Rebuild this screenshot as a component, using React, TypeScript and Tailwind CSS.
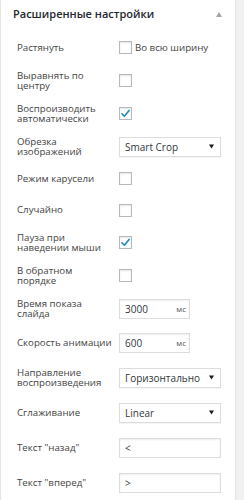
import React from "react";

const font = { fontFamily: '"Open Sans", "Noto Sans", sans-serif' };

function Check({ checked }: { checked?: boolean }) {
  return (
    <div className="w-[13px] h-[13px] border border-[#b4b9be] bg-white shadow-[inset_0_1px_2px_rgba(0,0,0,0.1)] flex items-center justify-center">
      {checked && (
        <svg width="11" height="11" viewBox="0 0 20 20">
          <path d="M3.5 10.5 L8 15 L16.5 4.5" fill="none" stroke="#1e8cbe" strokeWidth="3" strokeLinecap="round" strokeLinejoin="round" />
        </svg>
      )}
    </div>
  );
}

function Select({ value }: { value: string }) {
  return (
    <div className="w-[102px] h-[20px] border border-[#dddddd] bg-white flex items-center justify-between pl-[5px] pr-[6px] shadow-[0_1px_1px_rgba(0,0,0,0.04)]">
      <span className="text-[10px] text-[#32373c] leading-none">{value}</span>
      <svg width="5" height="5" viewBox="0 0 10 8">
        <path d="M0 0 L10 0 L5 8 Z" fill="#1a1a1a" />
      </svg>
    </div>
  );
}

function Input({ value, unit, wide }: { value: string; unit?: string; wide?: boolean }) {
  return (
    <div className={`${wide ? "w-[102px]" : "w-[71px]"} h-[20px] border border-[#dddddd] bg-white flex items-center justify-between pl-[5px] pr-[3px] shadow-[inset_0_1px_2px_rgba(0,0,0,0.07)]`}>
      <span className="text-[10px] text-[#32373c] leading-none">{value}</span>
      {unit && <span className="text-[8px] text-[#555] leading-none">{unit}</span>}
    </div>
  );
}

function Row({ h, label, children }: { h: string; label: React.ReactNode; children: React.ReactNode }) {
  return (
    <div className={`flex items-center ${h}`}>
      <div className="w-[102px] text-[9.7px] leading-[10px] text-[#444] whitespace-nowrap">{label}</div>
      <div className="flex items-center">{children}</div>
    </div>
  );
}

export default function App() {
  return (
    <div className="w-[244px] h-[500px] bg-[#f1f1f1] overflow-hidden flex" style={font}>
      <div className="w-[236px] h-full bg-white border-l border-r border-[#e5e5e5] flex flex-col">
        <div className="h-[31px] flex items-center justify-between pl-[12px] pr-[13px]">
          <span className="text-[11px] font-semibold text-[#23282d]">Расширенные настройки</span>
          <svg width="6" height="5" viewBox="0 0 10 8">
            <path d="M0 8 L10 8 L5 0 Z" fill="#a0a5aa" />
          </svg>
        </div>
        <div className="flex flex-col pl-[16px] pt-[3px]">
          <Row h="h-[32px]" label="Растянуть">
            <Check />
            <span className="ml-[3px] text-[9.7px] text-[#444]">Во всю ширину</span>
          </Row>
          <Row h="h-[33px]" label={<>Выравнять по<br />центру</>}>
            <Check />
          </Row>
          <Row h="h-[33px]" label={<>Воспроизводить<br />автоматически</>}>
            <Check checked />
          </Row>
          <Row h="h-[33px]" label={<>Обрезка<br />изображений</>}>
            <Select value="Smart Crop" />
          </Row>
          <Row h="h-[31px]" label="Режим карусели">
            <Check />
          </Row>
          <Row h="h-[32px]" label="Случайно">
            <Check />
          </Row>
          <Row h="h-[33px]" label={<>Пауза при<br />наведении мыши</>}>
            <Check checked />
          </Row>
          <Row h="h-[33px]" label={<>В обратном<br />порядке</>}>
            <Check />
          </Row>
          <Row h="h-[33px]" label={<>Время показа<br />слайда</>}>
            <Input value="3000" unit="мс" />
          </Row>
          <Row h="h-[35px]" label="Скорость анимации">
            <Input value="600" unit="мс" />
          </Row>
          <Row h="h-[35px]" label={<>Направление<br />воспроизведения</>}>
            <Select value="Горизонтально" />
          </Row>
          <Row h="h-[35px]" label="Сглаживание">
            <Select value="Linear" />
          </Row>
          <Row h="h-[35px]" label='Текст "назад"'>
            <Input value="<" wide />
          </Row>
          <Row h="h-[35px]" label='Текст "вперед"'>
            <Input value=">" wide />
          </Row>
        </div>
      </div>
    </div>
  );
}
